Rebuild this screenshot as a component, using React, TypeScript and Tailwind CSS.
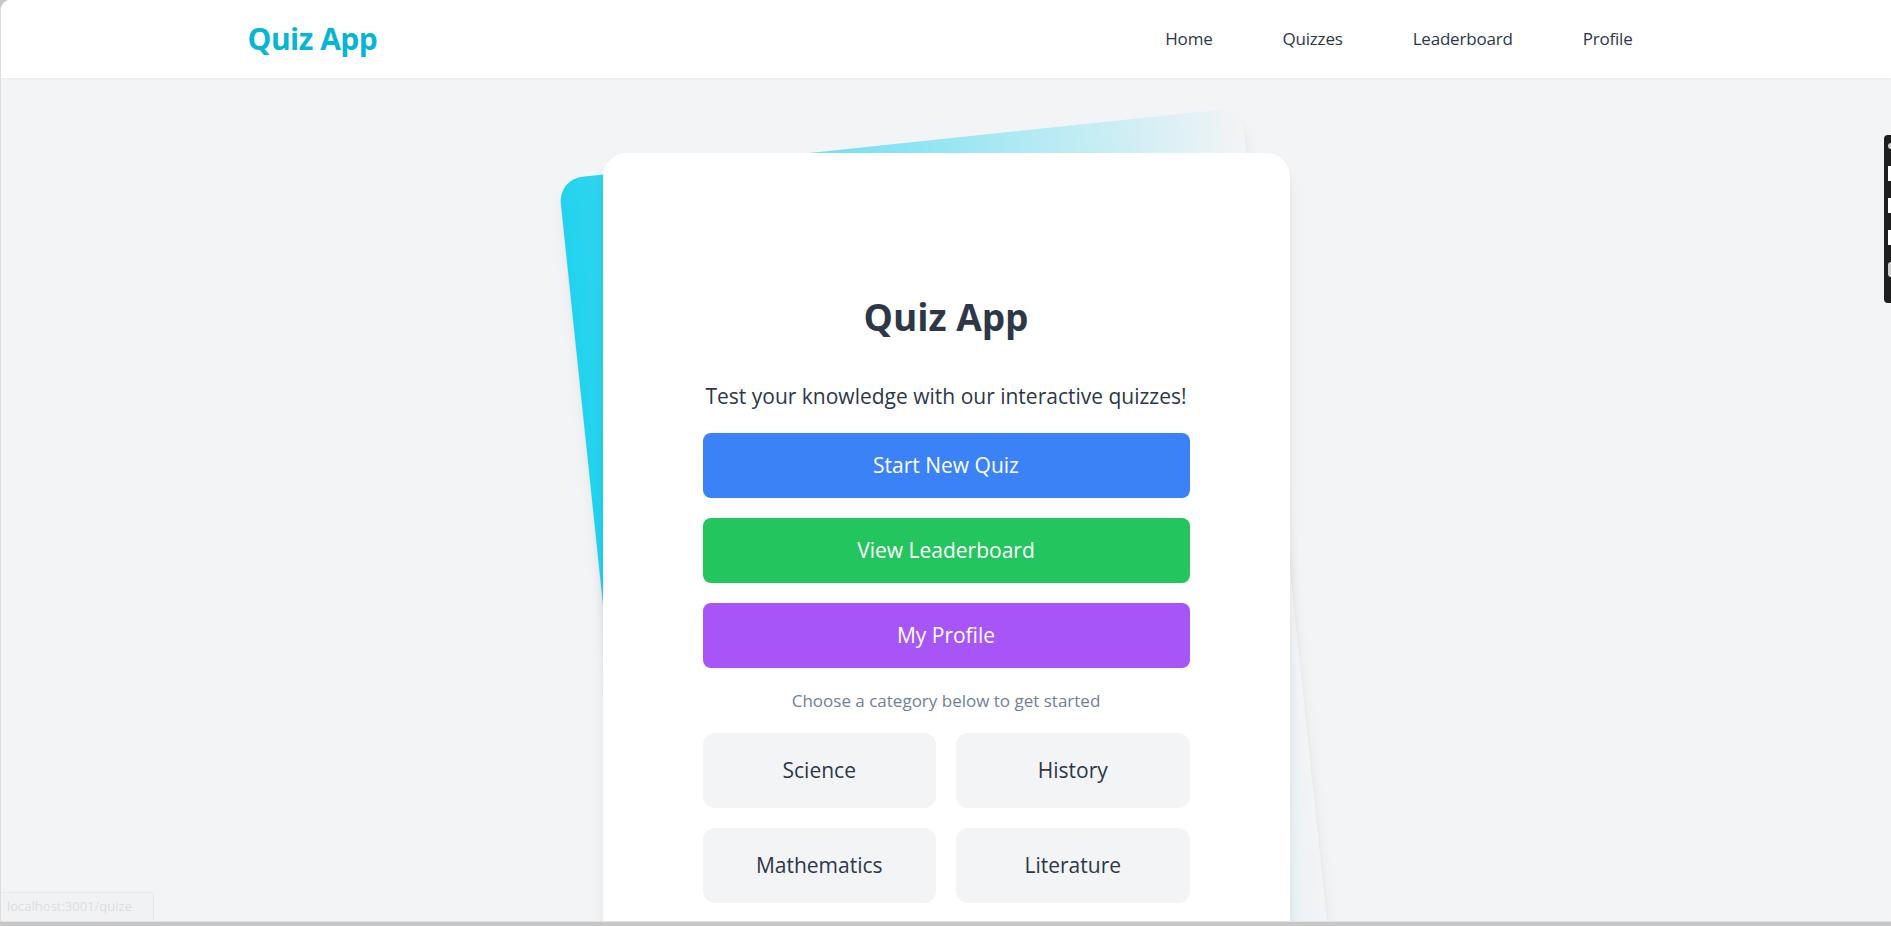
import React from 'react';

const navLinks = ['Home', 'Quizzes', 'Leaderboard', 'Profile'];
const categories = ['Science', 'History', 'Mathematics', 'Literature'];

const actions = [
  { label: 'Start New Quiz', cls: 'bg-[#3b82f6]' },
  { label: 'View Leaderboard', cls: 'bg-[#22c55e]' },
  { label: 'My Profile', cls: 'bg-[#a855f7]' },
];

const SideWidget: React.FC = () => (
  <div className="absolute right-0 top-[135px] w-[7px] h-[168px] bg-[#1e1e1e] rounded-l-[4px] flex flex-col items-end gap-[17px] pt-[8px]">
    <div className="w-[3px] h-[6px] bg-[#cfcfcf] rounded-l-full" />
    <div className="w-[3px] h-[15px] bg-white" />
    <div className="w-[3px] h-[15px] bg-white" />
    <div className="w-[3px] h-[15px] bg-white" />
    <div className="w-[3px] h-[15px] bg-[#cfcfcf] rounded-l-full" />
  </div>
);

export default function App() {
  return (
    <div className="h-screen flex flex-col overflow-hidden bg-[#c6c6c6] font-['Open_Sans','Noto_Sans',sans-serif]">
      <div className="relative flex-1 overflow-hidden bg-[#f3f4f6] border-l border-[#dedede] rounded-tl-[10px]">
        <nav className="h-[78px] bg-white shadow-[0_1px_2px_rgba(0,0,0,0.04)]">
          <div className="max-w-[1397px] mx-auto h-full flex items-center justify-between">
            <span className="text-3xl font-bold text-[#06b6d4] tracking-[-0.5px]">Quiz App</span>
            <div className="flex items-center gap-[46px]">
              {navLinks.map(l => (
                <a key={l} className="px-3 text-[17px] font-medium text-[#2d3748] tracking-[-0.2px]">
                  {l}
                </a>
              ))}
            </div>
          </div>
        </nav>

        <main className="pt-[63px]">
          <div className="relative py-3 w-[687px] mx-auto">
            <div className="absolute inset-0 bg-gradient-to-r from-[#22d3ee] to-[rgba(34,211,238,0)] shadow-lg -rotate-6 rounded-3xl" />
            <div className="relative bg-white shadow-lg rounded-3xl px-[100px] pt-[144px] pb-[118px]">
              <h1 className="text-[37px] leading-10 font-bold text-center text-[#2d3748]">Quiz App</h1>
              <p className="mt-[45px] text-[21px] leading-7 text-center text-[#2d3748]">
                Test your knowledge with our interactive quizzes!
              </p>
              <div className="mt-[23px] flex flex-col gap-5">
                {actions.map(a => (
                  <button
                    key={a.label}
                    className={`${a.cls} h-[65px] w-full rounded-lg text-[21px] text-white`}
                  >
                    {a.label}
                  </button>
                ))}
              </div>
              <p className="mt-[21px] text-[17px] leading-6 text-center text-[#718096]">
                Choose a category below to get started
              </p>
              <div className="mt-5 grid grid-cols-2 gap-5">
                {categories.map(c => (
                  <div
                    key={c}
                    className="h-[75px] bg-[#f3f4f6] rounded-xl flex items-center justify-center text-[21px] text-[#2d3748]"
                  >
                    {c}
                  </div>
                ))}
              </div>
            </div>
          </div>
        </main>

        <SideWidget />

        <div className="absolute left-0 bottom-0 w-[153px] h-[29px] bg-[#f1f2f4] border-t border-r border-[#e8e9eb] rounded-tr-[4px] flex items-center pl-[6px] text-[13px] text-[#dcdde0]">
          localhost:3001/quize
        </div>
      </div>
      <div className="h-[5px] bg-[#c6c6c6] border-t border-[#e2e2e2]" />
    </div>
  );
}
